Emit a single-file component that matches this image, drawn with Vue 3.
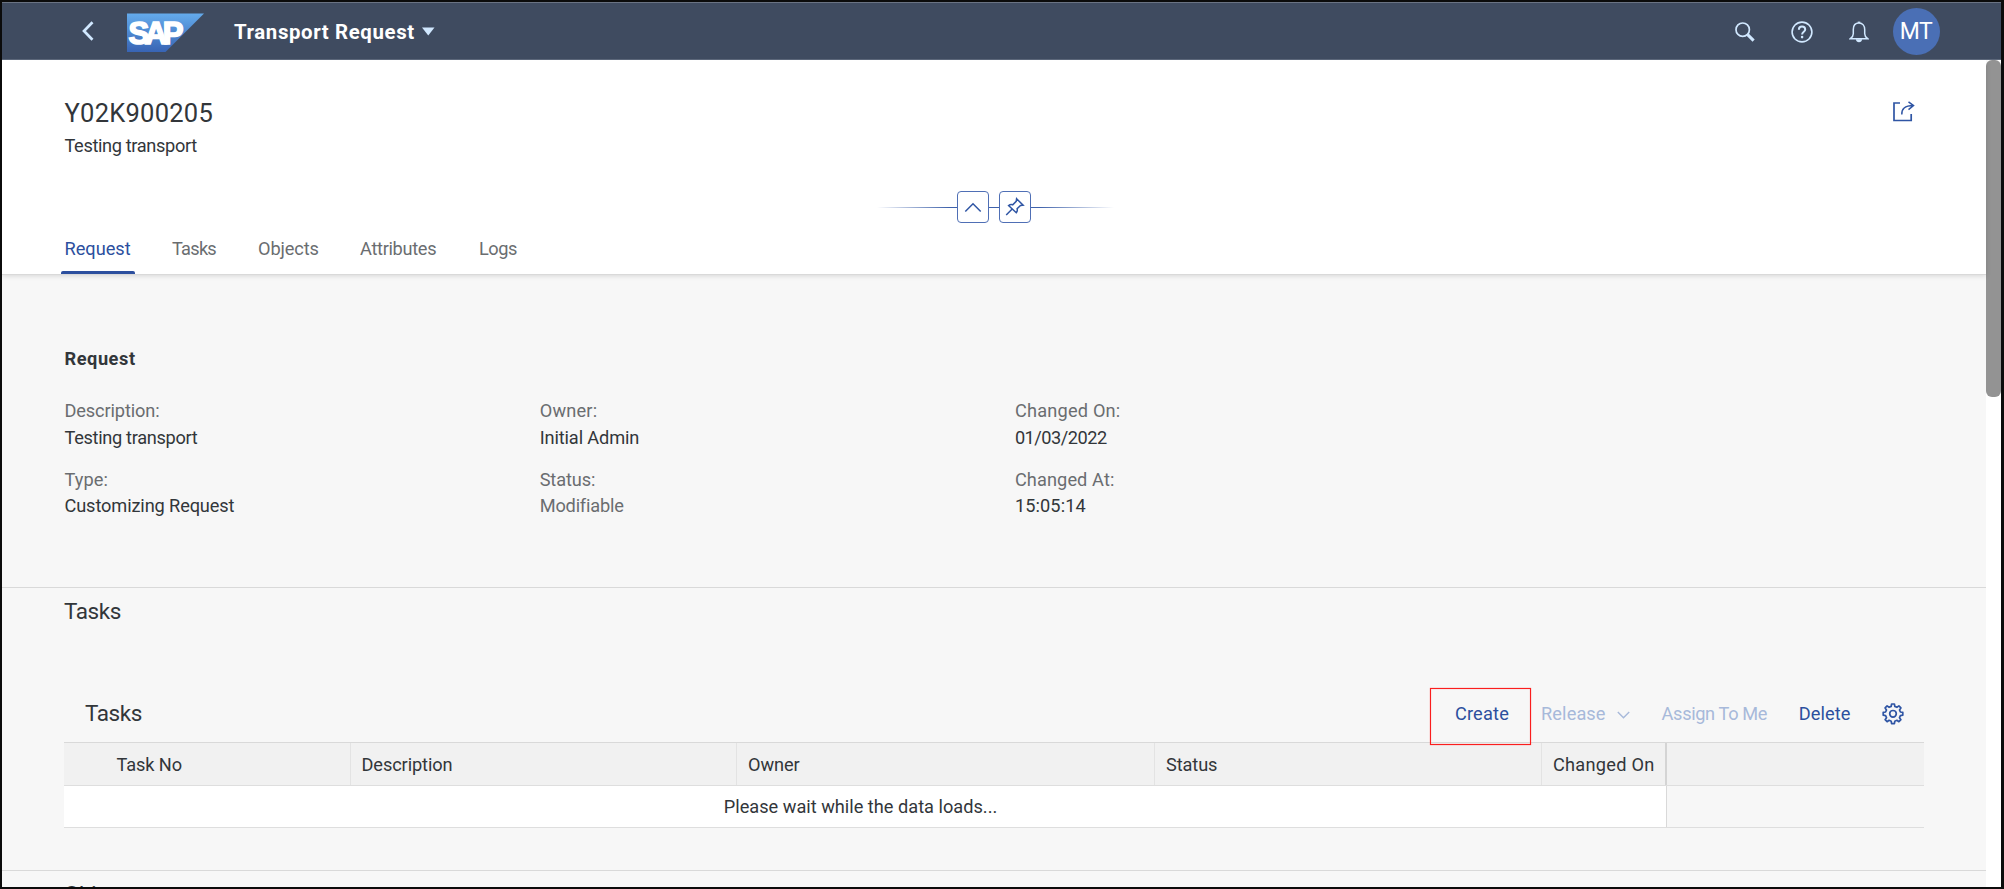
<script setup>
const tabs = [
  { label: 'Request', cls: 'active' },
  { label: 'Tasks', cls: 't-6' },
  { label: 'Objects', cls: 't-1' },
  { label: 'Attributes', cls: 't-3' },
  { label: 'Logs', cls: 't-5' },
]

const fields = [
  { label: 'Description:', lc: 't-1', value: 'Testing transport', vc: 't-3' },
  { label: 'Owner:', lc: 't2', value: 'Initial Admin', vc: 't-1' },
  { label: 'Changed On:', lc: 't2', value: '01/03/2022', vc: 't-5' },
  { label: 'Type:', lc: 't1', value: 'Customizing Request', vc: 't-1' },
  { label: 'Status:', lc: 't-1', value: 'Modifiable', vc: 'muted t-2' },
  { label: 'Changed At:', lc: 't1', value: '15:05:14', vc: 't1' },
]

const columns = ['Task No', 'Description', 'Owner', 'Status', 'Changed On', '']
</script>

<template>
  <div class="frame">
    <header class="shell">
      <svg class="back" width="12" height="20" viewBox="0 0 12 20"><path d="M10.5 1.2 2 10l8.500 8.800" fill="none" stroke="#d1e8ff" stroke-width="2.700" /></svg>
      <svg class="logo" width="78" height="40" viewBox="0 0 78 40">
        <defs>
          <linearGradient id="sapGradient" x1="0" y1="0" x2="0" y2="1">
            <stop offset="0" stop-color="#64abec" />
            <stop offset="1" stop-color="#3864b4" />
          </linearGradient>
        </defs>
        <path d="M0 .5H77L38.500 39H0z" fill="url(#sapGradient)" />
        <text class="logo-text" x="1.500" y="30.800" textLength="55" lengthAdjust="spacing">SAP</text>
      </svg>
      <h1>Transport Request</h1>
      <svg class="caret" width="13" height="9" viewBox="0 0 13 9"><path d="M0 .5h12.500L6.250 8.500z" fill="#d1e8ff" /></svg>
      <div class="shell-actions">
        <svg width="20" height="20" viewBox="0 0 20 20" fill="none" stroke="#d1e8ff"><circle cx="7.700" cy="7.700" r="6.700" stroke-width="1.700" /><path d="m12.600 12.600 6 6" stroke-width="3" /></svg>
        <svg width="22" height="22" viewBox="0 0 22 22" fill="none" stroke="#d1e8ff"><circle cx="11" cy="11" r="9.900" stroke-width="1.600" /><path d="M7.900 8.800C7.900 6.500 9.200 5.600 11 5.600s3.200 1 3.200 2.800c0 2.300-3.100 2.300-3.100 5.100" stroke-width="2" /><circle cx="11.100" cy="16.100" r="1.300" fill="#d1e8ff" stroke="none" /></svg>
        <svg width="20" height="22" viewBox="0 0 20 22" fill="none" stroke="#d1e8ff"><path d="M10 2.100c-3.700 0-5.700 2.600-5.700 6.400v4.300c0 2.100-1.300 3.700-2.900 4.900h17.200c-1.600-1.200-2.900-2.800-2.900-4.900V8.500c0-3.800-2-6.400-5.700-6.400z" stroke-width="1.500" /><path d="M10 .6v1.500" stroke-width="2.600" /><path d="M6.800 18.300h6.400c-.3 1.900-1.500 2.900-3.200 2.900s-2.900-1-3.200-2.900z" fill="#d1e8ff" stroke="none" /></svg>
        <div class="avatar">MT</div>
      </div>
    </header>

    <div class="body">
      <main>
        <section class="object-header">
          <h2>Y02K900205</h2>
          <p class="t-4">Testing transport</p>
          <svg class="share" width="24" height="21" viewBox="0 0 24 21" fill="none" stroke="#2f55a4"><path d="M8 2H2v17.500h17.200V13" stroke-width="1.700" /><path d="M9.800 13.500C9.500 8 12.500 4.600 21.500 4.600M16.500.8l5 3.800-5 4" stroke-width="1.500" /></svg>
          <div class="collapse">
            <i class="line left"></i>
            <span class="square"><svg width="18" height="11" viewBox="0 0 18 11"><path d="m1.300 9.500 7.700-7.700 7.700 7.700" /></svg></span>
            <i class="line mid"></i>
            <span class="square"><svg width="20" height="20" viewBox="0 0 20 20"><path d="m11.600 1.700 6.500 6.500-2.600.2-3.400 3.400c.5 1.700.1 2.900-.8 3.900L3.600 8.500c1.200-.9 2.400-1.200 4.100-.7l3.500-3.500zM7.200 12l-6 6" /></svg></span>
            <i class="line right"></i>
          </div>
          <nav>
            <a v-for="t in tabs" :key="t.label"><span :class="t.cls">{{ t.label }}</span></a>
          </nav>
        </section>

        <section class="request">
          <h3>Request</h3>
          <dl>
            <div v-for="f in fields" :key="f.label">
              <dt :class="f.lc">{{ f.label }}</dt>
              <dd :class="f.vc">{{ f.value }}</dd>
            </div>
          </dl>
        </section>

        <section class="tasks">
          <h4>Tasks</h4>
          <div class="toolbar">
            <h4>Tasks</h4>
            <button class="create t2">Create<i class="highlight"></i></button>
            <button class="release t1" disabled>Release<svg width="13" height="8" viewBox="0 0 13 8"><path d="m.8 1 5.700 5.700L12.200 1" fill="none" stroke="#a7b9da" stroke-width="1.400" /></svg></button>
            <button class="t-4" disabled>Assign To Me</button>
            <button class="t1">Delete</button>
            <svg class="gear" width="22" height="22" viewBox="0 0 22 22" fill="none" stroke="#2f55a4" stroke-width="1.700" stroke-linejoin="round"><path d="M9.200 3.400 9.600 1h2.800l.4 2.400 2.100.9 2-1.400 2 2-1.400 2 .9 2.100 2.400.4v2.800l-2.400.4-.9 2.100 1.400 2-2 2-2-1.400-2.100.9-.4 2.400H9.600l-.4-2.400-2.100-.9-2 1.400-2-2 1.400-2-.9-2.100-2.400-.4V9.400L3.600 9l.9-2.100-1.400-2 2-2 2 1.400z" /><circle cx="11" cy="10.800" r="3.300" /></svg>
          </div>
          <div class="row head">
            <div v-for="c in columns" :key="c" class="cell">{{ c }}</div>
          </div>
          <div class="row">
            <div class="empty">Please wait while the data loads...</div>
            <div></div>
          </div>
        </section>

        <section class="objects"><h4>Objects</h4></section>
      </main>
      <aside><div class="thumb"></div></aside>
    </div>
  </div>
</template>

<style>
body { overflow: hidden; }
</style>

<style scoped>
* { box-sizing: border-box; margin: 0; padding: 0; }
.frame { width: 2004px; height: 889px; border: 2px solid #0b0b0b; border-right-width: 3px; overflow: hidden; background: #fff; color: #32363a; font: 18.2px/24px Roboto, "Noto Sans", sans-serif; }
.shell { height: 58px; background: #3f4b60; border-top: 1px solid #6a7383; border-bottom: 1px solid #5c677a; display: flex; align-items: center; padding-left: 80px; }
.logo { margin-left: 33px; margin-top: 3px; }
.logo-text { font: bold 31px "Liberation Sans", Arial, sans-serif; fill: #fff; stroke: #fff; stroke-width: 1.7px; }
h1 { font-size: 20.4px; line-height: 26px; font-weight: 700; color: #fff; letter-spacing: .62px; margin: 1px 0 0 29px; }
.caret { margin-left: 7px; }
.shell-actions { margin-left: auto; display: flex; align-items: center; padding-right: 61.500px; }
.shell-actions svg { margin-top: 1px; }
.shell-actions svg + svg { margin-left: 36px; }
.avatar { width: 47px; height: 47px; margin-left: 24px; border-radius: 50%; background: #4a6fb5; color: #fff; font-size: 23px; line-height: 48px; text-align: center; letter-spacing: -.5px; }
.body { display: flex; height: 827px; overflow: hidden; }
main { width: 1984px; background: #f7f7f7; }
aside { width: 15px; background: #fff; }
.thumb { height: 337px; border-radius: 6px; background: #939393; }
.object-header { position: relative; height: 215px; background: #fff; border-bottom: 1px solid #d9d9d9; box-shadow: 0 1px 5px rgba(0, 0, 0, .13); padding: 37px 0 0 62.500px; }
h2 { font-size: 25.5px; line-height: 32px; font-weight: 400; letter-spacing: .25px; }
.object-header p { margin: 5px 0 0; }
.share { position: absolute; left: 1889.500px; top: 41px; }
.collapse { display: flex; align-items: center; margin: 33px 0 0 812.500px; height: 32px; }
.line { height: 1px; margin-top: 1px; background: #3f62ab; }
.line.left { width: 80px; background: linear-gradient(90deg, transparent, #3f62ab 90%); }
.line.right { width: 83px; background: linear-gradient(270deg, transparent, #3f62ab 90%); }
.line.mid { width: 10px; }
.square { width: 32px; height: 32px; border: 1.500px solid #4f6fb5; border-radius: 4px; display: flex; align-items: center; justify-content: center; }
.square svg { fill: none; stroke: #2f55a4; stroke-width: 1.500; }
nav { display: grid; grid-template-columns: 107.500px 86px 102px 119px auto; height: 51px; color: #6a6d70; }
nav a { padding-top: 14px; }
nav span { display: inline-block; height: 37px; }
nav .active { color: #2c4f9e; position: relative; }
nav .active::after { content: ''; position: absolute; left: -4px; bottom: 0; width: 74px; height: 3px; background: #2c4f9e; border-radius: 2px 2px 0 0; }
.request { height: 313px; padding: 72px 0 0 62.500px; border-bottom: 1px solid #d9d9d9; }
h3 { font-size: 18.2px; font-weight: 700; letter-spacing: .55px; line-height: 24px; }
dl { display: grid; grid-template-columns: repeat(3, 475.200px); row-gap: 16px; margin-top: 27px; line-height: 26.400px; }
dt, .muted { color: #6a6d70; }
dd { padding-top: .300px; height: 26.100px; }
h4 { font-size: 22.5px; line-height: 30px; font-weight: 400; letter-spacing: -.45px; }
.tasks { height: 283px; padding: 8px 62px 0; border-bottom: 1px solid #d9d9d9; }
.toolbar { display: flex; align-items: center; height: 56px; margin-top: 60px; padding: 0 20px 0 21px; }
.toolbar h4 { margin: -2px auto 0 0; }
button { border: 0; background: none; color: #2c4f9e; font: inherit; margin-right: 31.500px; }
button:disabled { color: #a7b9da; }
.create { position: relative; margin-right: 32px; }
.highlight { position: absolute; left: -25px; top: -14px; width: 101px; height: 57px; border: 1.500px solid #fa1e1e; box-shadow: 0 0 1px #f66, inset 0 0 1px #f66; }
.release svg { margin: 0 0 0 11.500px; vertical-align: 1px; }
.row { display: grid; grid-template-columns: 1603px 257px; grid-template-rows: 100%; height: 42px; border-bottom: 1px solid #dedede; }
.row.head { grid-template-columns: 287px 386px 418px 387px 125px 257px; height: 44px; border-top: 1px solid #d9d9d9; background: #f1f1f1; line-height: 43px; letter-spacing: -.1px; }
.cell { padding-left: 11px; border-right: 1px solid #e3e3e3; }
.cell:first-child { padding-left: 52.500px; }
.cell:nth-child(2) { padding-left: 10.500px; }
.cell:nth-child(5) { border-right: 2px solid #d4d4d4; letter-spacing: .25px; }
.cell:last-child { border: 0; }
.empty { background: #fff; border-right: 1px solid #d9d9d9; text-align: center; line-height: 42px; padding-right: 9px; }
.objects { padding: 8px 62px 0; }
.t1 { letter-spacing: .1px; }
.t2 { letter-spacing: .2px; }
.t-1 { letter-spacing: -.12px; }
.t-2 { letter-spacing: -.19px; }
.t-3 { letter-spacing: -.32px; }
.t-4 { letter-spacing: -.36px; }
.t-5 { letter-spacing: -.5px; }
.t-6 { letter-spacing: -.75px; }
</style>
